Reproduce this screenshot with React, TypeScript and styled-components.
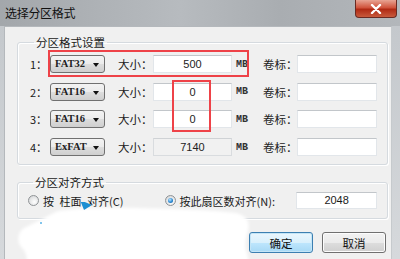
import styled, { createGlobalStyle } from "styled-components";

const GlobalStyle = createGlobalStyle`
  html, body {
    margin: 0;
    padding: 0;
    background: #f0f0f0;
  }
  body {
    font-family: "Noto Sans CJK SC", "Liberation Sans", sans-serif;
    color: #1a1a1a;
  }
`;

type Partition = {
  id: number;
  fs: string;
  size: string;
  disabled?: boolean;
};

const partitions: Partition[] = [
  { id: 1, fs: "FAT32", size: "500" },
  { id: 2, fs: "FAT16", size: "0" },
  { id: 3, fs: "FAT16", size: "0" },
  { id: 4, fs: "ExFAT", size: "7140", disabled: true },
];

export default function App() {
  return (
    <>
      <GlobalStyle />
      <Window>
        <TitleBar>
          <Title>选择分区格式</Title>
          <CloseButton>
            <svg width="12" height="10" viewBox="0 0 12 10">
              <path d="M2 1 L10 9 M10 1 L2 9" stroke="#fff" strokeWidth="2.4" strokeLinecap="round" />
            </svg>
          </CloseButton>
        </TitleBar>
        <Client>
          <Group>
            <Legend>分区格式设置</Legend>
            <PartitionGrid>
              {partitions.map((p) => (
                <Row key={p.id}>
                  <Label>{p.id}：</Label>
                  <Combo>
                    {p.fs}
                    <Arrow />
                  </Combo>
                  <FieldLabel $indent={13}>大小：</FieldLabel>
                  <TextBox $disabled={p.disabled} $align="center">
                    {p.size}
                  </TextBox>
                  <Unit>MB</Unit>
                  <FieldLabel $indent={0}>卷标：</FieldLabel>
                  <TextBox $align="left" />
                </Row>
              ))}
            </PartitionGrid>
          </Group>

          <AlignGroup>
            <Legend>分区对齐方式</Legend>
            <AlignRow>
              <Option $width={137}>
                <Radio />
                <span>按{"\u2002"}柱面{"\u2002"}对齐(C)</span>
              </Option>
              <Option $width={132}>
                <Radio $checked />
                <span>按此扇区数对齐(N):</span>
              </Option>
              <SectorBox>2048</SectorBox>
            </AlignRow>
          </AlignGroup>

          <Buttons>
            <Button $primary>确定</Button>
            <Button>取消</Button>
          </Buttons>
        </Client>

        <Highlight style={{ left: 48, top: 50, width: 201, height: 27 }} />
        <Highlight style={{ left: 172, top: 80, width: 39, height: 52 }} />

        <Smudge width="250" height="64" viewBox="0 0 250 64">
          <defs>
            <filter id="soft" x="-10%" y="-10%" width="120%" height="120%">
              <feGaussianBlur stdDeviation="1.4" />
            </filter>
          </defs>
          <path
            filter="url(#soft)"
            fill="#ffffff"
            d="M44 9 C62 6 95 5 125 6 C160 7 200 8 222 11 C234 14 236 21 234 29 C232 37 230 43 233 51 L236 64 L14 64 C12 58 14 52 8 46 C2 40 4 30 10 26 C18 22 30 16 44 9 Z"
          />
          <path fill="#1c8fd2" d="M66 -2 L78 3 L70 8 Z" />
          <circle cx="27" cy="21" r="1" fill="#58b2e6" />
        </Smudge>
      </Window>
    </>
  );
}

const Window = styled.div`
  position: relative;
  width: 400px;
  height: 259px;
  overflow: hidden;
  display: flex;
  flex-direction: column;
  background: linear-gradient(#a9adb1, #c4c8cc 26px, #d6d9dc);
`;

const TitleBar = styled.div`
  height: 26px;
  flex-shrink: 0;
  display: flex;
  align-items: center;
  padding-left: 5px;
  background: linear-gradient(90deg, #a3a7ab, #b7bbbf 45%, #a9adb1 70%, #b3b7bb);
`;

const Title = styled.div`
  font-size: 12px;
  line-height: 14px;
  color: #111;
  letter-spacing: -0.3px;
`;

const CloseButton = styled.div`
  align-self: flex-start;
  margin-left: auto;
  margin-right: 3px;
  width: 42px;
  height: 18px;
  display: flex;
  align-items: center;
  justify-content: center;
  border: 1px solid #6a2a22;
  border-top: none;
  border-radius: 0 0 4px 4px;
  background: linear-gradient(#e8a493, #d0533c 45%, #b02a14 55%, #c85a3c);
  box-sizing: border-box;
`;

const Client = styled.div`
  flex: 1;
  margin: 0 8px 0 4px;
  padding: 0 3px 0 12px;
  background: #f0f0f0;
  border-left: 1px solid #b4b8bc;
  border-top: 1px solid #b4b8bc;
  border-right: 1px solid #c6cacd;
  display: flex;
  flex-direction: column;
`;

const Group = styled.fieldset`
  margin: 8px 0 0 0;
  padding: 6px 10px 8px 11px;
  border: 1px solid #d5dadf;
  border-radius: 3px;
  box-shadow: inset 1px 1px 0 #fff, 1px 1px 0 #fff;
  min-width: 0;
`;

const AlignGroup = styled(Group)`
  margin-top: 10px;
  padding: 3px 10px 9px 10px;
`;

const Legend = styled.legend`
  margin-left: 5px;
  padding: 0 2px;
  font-size: 11.5px;
  line-height: 14px;
  color: #1a1a1a;
`;

const PartitionGrid = styled.div`
  display: flex;
  flex-direction: column;
  gap: 9.7px;
`;

const Row = styled.div`
  display: grid;
  grid-template-columns: 21px 55px 48px 79px 31px 34px 80px;
  height: 18px;
  align-items: center;
`;

const Label = styled.span`
  font-size: 11px;
  line-height: 18px;
  padding-left: 1px;
`;

const Combo = styled.div`
  position: relative;
  height: 18px;
  box-sizing: border-box;
  border: 1px solid #707070;
  border-radius: 3px;
  background: linear-gradient(#f3f3f3, #ebebeb 50%, #dddddd 51%, #cfcfcf);
  font-family: "Liberation Serif", serif;
  font-weight: bold;
  font-size: 10.5px;
  line-height: 16px;
  padding-left: 4px;
  color: #222;
`;

const Arrow = styled.span`
  position: absolute;
  right: 5px;
  top: 7px;
  width: 0;
  height: 0;
  border-left: 3.5px solid transparent;
  border-right: 3.5px solid transparent;
  border-top: 4px solid #111;
`;

const FieldLabel = styled.span<{ $indent: number }>`
  padding-left: ${(p) => p.$indent}px;
  font-size: 11.5px;
  line-height: 18px;
  white-space: nowrap;
`;

const TextBox = styled.div<{ $disabled?: boolean; $align: "left" | "center" }>`
  height: 18px;
  box-sizing: border-box;
  border: 1px solid ${(p) => (p.$disabled ? "#d9dcdf" : "#e2e6ea")};
  border-top-color: ${(p) => (p.$disabled ? "#cfd2d5" : "#c2c6ca")};
  background: ${(p) => (p.$disabled ? "#f1f1f1" : "#ffffff")};
  text-align: ${(p) => p.$align};
  font-family: "Liberation Sans", sans-serif;
  font-size: 11px;
  line-height: 16px;
  color: #222;
`;

const Unit = styled.span`
  padding-left: 4px;
  font-family: "Liberation Mono", monospace;
  font-weight: bold;
  font-size: 10px;
  color: #333;
`;

const AlignRow = styled.div`
  display: flex;
  align-items: center;
  height: 17px;
`;

const Option = styled.label<{ $width: number }>`
  width: ${(p) => p.$width}px;
  display: flex;
  align-items: center;
  gap: 4px;
  font-size: 11px;
  line-height: 14px;
  white-space: nowrap;
`;

const Radio = styled.span<{ $checked?: boolean }>`
  position: relative;
  width: 11px;
  height: 11px;
  flex-shrink: 0;
  box-sizing: border-box;
  border-radius: 50%;
  border: 1px solid #8f9396;
  background: radial-gradient(circle at 60% 65%, #ffffff, #e2e3e4 60%, #c9cbcd);

  &::after {
    content: "";
    display: ${(p) => (p.$checked ? "block" : "none")};
    position: absolute;
    left: 2px;
    top: 2px;
    width: 5px;
    height: 5px;
    border-radius: 50%;
    background: radial-gradient(circle at 40% 35%, #bfe6ff, #2a8ad4 55%, #13508c);
  }
`;

const SectorBox = styled.div`
  width: 81px;
  height: 17px;
  box-sizing: border-box;
  border: 1px solid #e2e6ea;
  border-top-color: #c2c6ca;
  background: #fff;
  text-align: center;
  font-family: "Liberation Sans", sans-serif;
  font-size: 11px;
  line-height: 15px;
`;

const Buttons = styled.div`
  display: flex;
  justify-content: flex-end;
  gap: 9px;
  margin-top: 13px;
  padding-right: 2px;
`;

const Button = styled.div<{ $primary?: boolean }>`
  width: 64px;
  height: 21px;
  box-sizing: border-box;
  border: 1px solid ${(p) => (p.$primary ? "#3c7fb1" : "#707070")};
  border-radius: 3px;
  background: ${(p) =>
    p.$primary
      ? "linear-gradient(#eaf6fd, #d9f0fc 50%, #bee6fd 51%, #a7d9f5)"
      : "linear-gradient(#f2f2f2, #ebebeb 50%, #dddddd 51%, #cfcfcf)"};
  box-shadow: ${(p) => (p.$primary ? "inset 0 0 0 1px #c4e5f6" : "inset 0 0 0 1px #fcfcfc")};
  display: flex;
  align-items: center;
  justify-content: center;
  font-size: 11.5px;
  color: #111;
`;

const Highlight = styled.div`
  position: absolute;
  box-sizing: border-box;
  border: 2px solid #ee4248;
  pointer-events: none;
`;

const Smudge = styled.svg`
  position: absolute;
  left: 14px;
  top: 202px;
  pointer-events: none;
`;
